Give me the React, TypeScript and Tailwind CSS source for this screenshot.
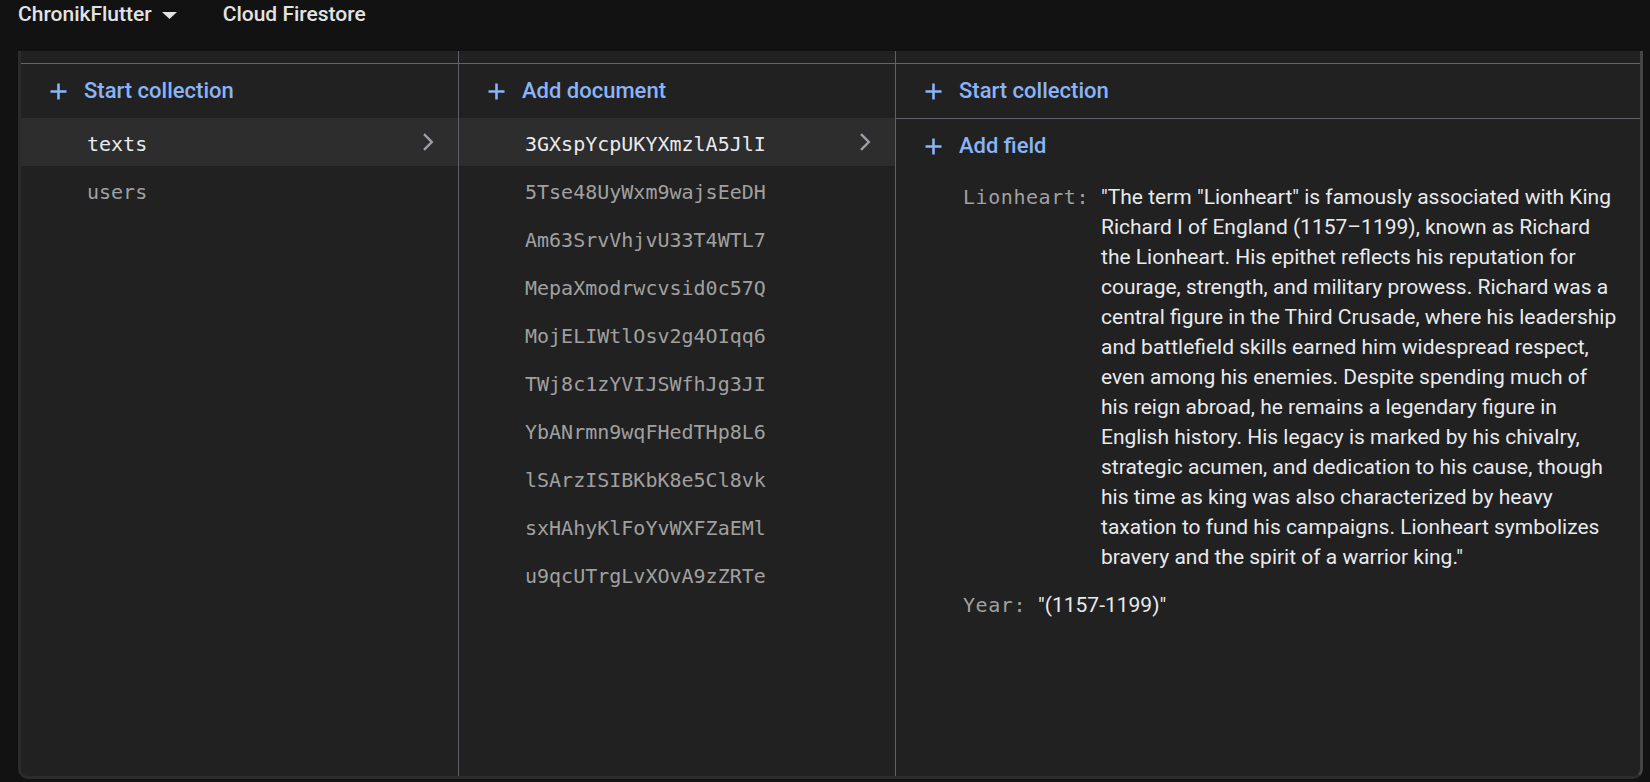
import React from "react";

const ids = [
  "3GXspYcpUKYXmzlA5JlI",
  "5Tse48UyWxm9wajsEeDH",
  "Am63SrvVhjvU33T4WTL7",
  "MepaXmodrwcvsid0c57Q",
  "MojELIWtlOsv2g4OIqq6",
  "TWj8c1zYVIJSWfhJg3JI",
  "YbANrmn9wqFHedTHp8L6",
  "lSArzISIBKbK8e5Cl8vk",
  "sxHAhyKlFoYvWXFZaEMl",
  "u9qcUTrgLvXOvA9zZRTe",
];

const lines = [
  "\"The term \"Lionheart\" is famously associated with King",
  "Richard I of England (1157–1199), known as Richard",
  "the Lionheart. His epithet reflects his reputation for",
  "courage, strength, and military prowess. Richard was a",
  "central figure in the Third Crusade, where his leadership",
  "and battlefield skills earned him widespread respect,",
  "even among his enemies. Despite spending much of",
  "his reign abroad, he remains a legendary figure in",
  "English history. His legacy is marked by his chivalry,",
  "strategic acumen, and dedication to his cause, though",
  "his time as king was also characterized by heavy",
  "taxation to fund his campaigns. Lionheart symbolizes",
  "bravery and the spirit of a warrior king.\"",
];

const MONO = "font-['DejaVu_Sans_Mono','Liberation_Mono',monospace]";

function Plus() {
  return (
    <svg width="17" height="17" viewBox="0 0 17 17" className="shrink-0">
      <path d="M8.5 0.5V16.5M0.5 8.5H16.5" stroke="#8ab4f8" strokeWidth="2.6" fill="none" />
    </svg>
  );
}

function Chevron() {
  return (
    <svg width="12" height="20" viewBox="0 0 12 20" className="shrink-0">
      <path d="M2 2.2L9.8 10L2 17.8" stroke="#9aa0a6" strokeWidth="2.4" fill="none" />
    </svg>
  );
}

function Action({ label }: { label: string }) {
  return (
    <div className="h-[54px] flex items-center pl-[29px] gap-[17px]">
      <Plus />
      <span className="text-[22px] font-medium text-[#8ab4f8] leading-none">{label}</span>
    </div>
  );
}

function Row({ text, selected }: { text: string; selected?: boolean }) {
  return (
    <div
      className={`h-[48px] flex items-center justify-between pl-[66px] pr-[24px] ${
        selected ? "bg-[#2d2d2d] text-[#e8eaed]" : "text-[#a0a0a0]"
      }`}
    >
      <span className={`${MONO} text-[20px] leading-none pt-[4px]`}>{text}</span>
      {selected && <Chevron />}
    </div>
  );
}

function TopStrip() {
  return <div className="h-[13px] border-b border-[#63636d] shrink-0" />;
}

export default function App() {
  return (
    <div className="w-[1650px] h-[782px] bg-[#121212] overflow-hidden font-['Roboto','Liberation_Sans',sans-serif]">
      <div className="h-[51px] flex items-start pl-[18px]">
        <div className="h-[30px] flex items-center text-[21px] font-medium text-[#e3e3e3]">
          <span>ChronikFlutter</span>
          <svg width="15" height="7" viewBox="0 0 15 7" className="ml-[10px]">
            <path d="M0 0H15L7.5 7Z" fill="#e3e3e3" />
          </svg>
          <span className="ml-[46px]">Cloud Firestore</span>
        </div>
      </div>
      <div className="ml-[18px] w-[1625px] h-[728px] bg-[#212121] border-l-[3px] border-b-[3px] border-[#2b2b2b] border-r-[3px] border-r-[#454545] rounded-b-[10px] flex overflow-hidden">
        <div className="w-[438px] border-r border-[#5f5f6a] shrink-0 flex flex-col">
          <TopStrip />
          <Action label="Start collection" />
          <Row text="texts" selected />
          <Row text="users" />
        </div>
        <div className="w-[437px] border-r border-[#5f5f6a] shrink-0 flex flex-col">
          <TopStrip />
          <Action label="Add document" />
          {ids.map((id, i) => (
            <Row key={id} text={id} selected={i === 0} />
          ))}
        </div>
        <div className="flex-1 flex flex-col">
          <TopStrip />
          <div className="border-b border-[#5f5f6a]">
            <Action label="Start collection" />
          </div>
          <Action label="Add field" />
          <div className="flex pl-[67px] py-[9px]">
            <span className={`${MONO} text-[20px] tracking-[0.56px] leading-[30px] text-[#a0a0a0] whitespace-nowrap`}>
              Lionheart:
            </span>
            <div className="ml-[12px] text-[21px] leading-[30px] text-[#e8eaed] whitespace-nowrap">
              {lines.map((l, i) => (
                <div key={i}>{l}</div>
              ))}
            </div>
          </div>
          <div className="flex pl-[67px] py-[9px]">
            <span className={`${MONO} text-[20px] tracking-[0.56px] leading-[30px] text-[#a0a0a0] whitespace-nowrap`}>
              Year:
            </span>
            <div className="ml-[12px] text-[21px] leading-[30px] text-[#e8eaed] whitespace-nowrap">
              "(1157-1199)"
            </div>
          </div>
        </div>
      </div>
    </div>
  );
}
